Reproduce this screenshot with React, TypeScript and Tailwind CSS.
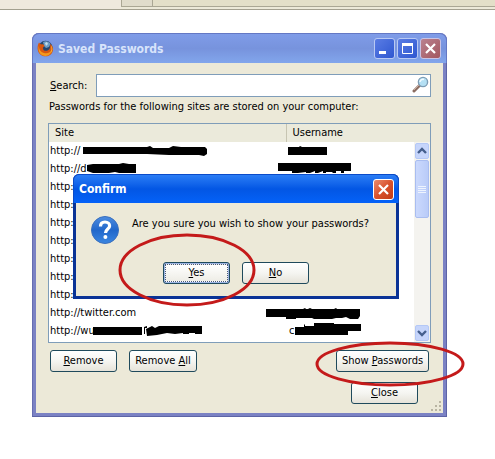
import React from 'react';

type Row = {
  site: string;
  user?: string;
  siteMask?: string;
  userMask?: string;
};

// masks are drawn in the cell's own coordinates
const ROWS: Row[] = [
  {
    site: 'http://',
    siteMask: 'M34 5H98L101 4L104 6H120L124 4L132 5H156L158 7V12L155 14L150 13H120L98 12H34Z',
    userMask: 'M2 5H13L14 4L16 5H41V13H2Z',
  },
  {
    site: 'http://d',
    siteMask: 'M38 5L44 4H70L74 3L80 4H87V13H70L66 12L60 13H44L38 11Z',
    userMask: 'M-8 3H65V11H58V13H55V11H50V13H47L46 12H40V13H37V11L32 13H29V11L24 13H20V12L12 13H6V11H-8Z',
  },
  { site: 'http:' },
  { site: 'http:' },
  { site: 'http:' },
  { site: 'http:' },
  { site: 'http:' },
  { site: 'http:' },
  { site: 'http:' },
  {
    site: 'http://twitter.com',
    userMask: 'M-20 5H17L19 4L20 5H22L24 4L26 5H48L50 4L51 5H74V12L72 15H64L60 13L56 14H50L46 15H28L26 14H10V15H0V13H-20Z',
  },
  {
    site: 'http://wu',
    user: 'c',
    siteMask: 'M44 5H93V13H44ZM95 5L98 4V6H96V12H95ZM97 7L103 4L106 6L110 4H153V12H146V11H140V12H134V11L126 12L118 11L108 13L98 14Z',
    userMask: 'M9 5H18V3L19 2V4H28V1H48V2H75V9H62V13H9Z',
  },
];

const BUTTON =
  'h-[22px] rounded-[3px] border border-[#1f4a5c] bg-gradient-to-b from-white via-[#f5f5f1] to-[#e6e3d9] text-center leading-4 whitespace-nowrap';

function Mask({ d }: { d?: string }) {
  if (!d) return null;
  return (
    <svg className="absolute top-0 left-0 overflow-visible" width="18" height="18" aria-hidden="true">
      <path d={d} fill="#000" />
    </svg>
  );
}

function FirefoxIcon() {
  return (
    <svg width="17" height="17" viewBox="0 0 17 17" aria-hidden="true">
      <circle cx="8.5" cy="8" r="7.2" fill="#27456f" />
      <path d="M6 2C8 .8 12 1 13.500 4L12 7L9 8L7 6Z" fill="#6d9cc4" />
      <path d="M8 3L10 2L11 4L9 6Z" fill="#c3dcea" />
      <path
        d="M2 2.500L4 4.500C5.500 4 7 4.500 7.500 6L6 7.500C5.500 10 8 11.500 10.500 10.500C13 9.500 13.500 7 13 4C16 6 17 9.500 15 13C12.500 17 6 17.500 2.800 14C0 11 0 6 2 2.500Z"
        fill="#d9560f"
      />
      <path d="M2 5C1.500 9 3.500 12 7 13C11 14 13.500 12 14.800 9.500C15 13 12 16 8.500 16C4 16 0 12 2 5Z" fill="#f39a1d" />
      <path d="M14 5C16 8 15.500 11 14 13C14.800 10 14.800 8 14 5Z" fill="#ffd84a" />
    </svg>
  );
}

function SearchIcon() {
  return (
    <svg className="absolute top-[2px] right-[2px]" width="17" height="17" viewBox="0 0 17 17" aria-hidden="true">
      <path d="M2 15L8 9" stroke="#8c6d61" strokeWidth="3" strokeLinecap="round" />
      <path d="M2 14L7 9" stroke="#c9aea3" strokeWidth="1" />
      <circle cx="11" cy="6" r="4.600" fill="#b5e0f4" stroke="#7d9db5" strokeWidth="1.400" />
      <path d="M8 6C8 4 10 3 12 3.500" stroke="#f2fbff" strokeWidth="1.500" fill="none" />
    </svg>
  );
}

function QuestionIcon() {
  return (
    <svg className="shrink-0" width="28" height="28" viewBox="0 0 28 28" aria-hidden="true">
      <defs>
        <linearGradient id="ask" x1="0" y1="0" x2="0" y2="1">
          <stop offset="0" stopColor="#4d8ce0" />
          <stop offset="0.500" stopColor="#2167cb" />
          <stop offset="1" stopColor="#3b86e0" />
        </linearGradient>
      </defs>
      <circle cx="14" cy="14" r="13.500" fill="url(#ask)" stroke="#3a6fbd" />
      <path
        d="M9.500 10.500C9.500 7.500 11.500 6 14 6C16.800 6 18.600 7.700 18.600 10C18.600 13 14.500 13.200 14.500 17"
        fill="none"
        stroke="#fff"
        strokeWidth="3.200"
      />
      <circle cx="14.400" cy="21" r="2" fill="#fff" />
    </svg>
  );
}

function CloseGlyph() {
  return (
    <svg width="19" height="19" viewBox="0 0 19 19" aria-hidden="true">
      <path d="M5 5L14 14M14 5L5 14" stroke="#fff" strokeWidth="2.200" />
    </svg>
  );
}

function ScrollArrow({ d, label }: { d: string; label: string }) {
  return (
    <button
      aria-label={label}
      className="flex h-4 w-full items-center justify-center rounded-[2px] border border-[#b4c8f6] bg-[#c6d5fb]"
    >
      <svg width="10" height="8" viewBox="0 0 10 8" aria-hidden="true">
        <path d={d} fill="none" stroke="#455f8d" strokeWidth="2.400" />
      </svg>
    </button>
  );
}

function ScrollBar() {
  return (
    <div className="absolute top-[18px] right-0 bottom-0 flex w-4 flex-col bg-[#f4f3ef] p-px">
      <ScrollArrow label="Scroll up" d="M1 6L5 2L9 6" />
      <div className="mt-px flex h-[58px] flex-col items-center justify-center gap-px rounded-[2px] border border-[#a9bdf0] bg-gradient-to-r from-[#cbd9fd] to-[#b9cbf8]">
        <span className="h-px w-2 bg-[#eef4fe]" />
        <span className="h-px w-2 bg-[#eef4fe]" />
        <span className="h-px w-2 bg-[#eef4fe]" />
        <span className="h-px w-2 bg-[#eef4fe]" />
      </div>
      <div className="flex-1" />
      <ScrollArrow label="Scroll down" d="M1 2L5 6L9 2" />
    </div>
  );
}

function BrowserStrip() {
  return (
    <div className="flex h-[10px] border-b border-[#a3a08f] bg-[#ece9d8]">
      <div className="w-[121px] bg-[#efe9dd]" />
      <div className="mb-[2px] w-8 border-x border-b border-[#aaa794] bg-[#e0dccb]" />
      <div className="mb-[2px] flex-1 border-b border-[#aaa794] bg-[#e3dfc8]" />
    </div>
  );
}

function ConfirmDialog() {
  return (
    <div
      role="dialog"
      aria-label="Confirm"
      className="absolute top-[141px] right-12 left-[41px] rounded-t-[6px] bg-[#0a3396] px-[3px] pb-[3px]"
    >
      <div className="-mx-[3px] flex h-[29px] items-center justify-between rounded-t-[6px] border border-b-0 border-[#0b4bc9] bg-gradient-to-b from-[#2a7df5] via-[#0356e4] to-[#0462f8] pr-1 pl-[5px]">
        <h2 className="text-[12px] leading-4 font-bold text-white">Confirm</h2>
        <button
          aria-label="Close"
          className="flex size-[21px] items-center justify-center rounded-[3px] border border-white bg-gradient-to-br from-[#e88a6c] via-[#d9512c] to-[#c03c16]"
        >
          <CloseGlyph />
        </button>
      </div>
      <div className="bg-[#ece9d8] px-[15px] pt-[13px] pb-3">
        <div className="flex items-start gap-[13px]">
          <QuestionIcon />
          <p className="leading-4 whitespace-nowrap">Are you sure you wish to show your passwords?</p>
        </div>
        <div className="mt-[18px] flex justify-center gap-3">
          <button className="h-[22px] w-[67px] rounded-[3px] border border-[#1f4a5c] bg-[#9db5e4] p-px leading-4">
            <span className="block h-full border border-dotted border-[#4a5a78] bg-gradient-to-b from-white to-[#eeede6]">
              <u>Y</u>es
            </span>
          </button>
          <button className={`${BUTTON} w-[67px]`}>
            <u>N</u>o
          </button>
        </div>
      </div>
    </div>
  );
}

function PasswordTable() {
  return (
    <div className="relative mt-2 border border-[#7f9db9] bg-white pb-[2px]">
      <table className="w-full table-fixed border-collapse">
        <thead>
          <tr className="h-[18px] bg-[#ebeadb] text-left">
            <th className="w-[237px] border-r border-[#c7c5b2] p-0 pl-[6px] leading-4 font-normal">Site</th>
            <th className="p-0 pl-[6px] leading-4 font-normal">Username</th>
          </tr>
        </thead>
        <tbody>
          {ROWS.map((row, i) => (
            <tr key={i} className="h-[18px]">
              <td className="relative p-0 pl-px leading-4">
                {row.site}
                <Mask d={row.siteMask} />
              </td>
              <td className="relative p-0 pl-[3px] leading-4">
                {row.user}
                <Mask d={row.userMask} />
              </td>
            </tr>
          ))}
        </tbody>
      </table>
      <ScrollBar />
    </div>
  );
}

export default function App() {
  return (
    <div className="min-h-screen bg-white font-['DejaVu_Sans_Condensed','DejaVu_Sans',sans-serif] text-[11px] text-black">
      <BrowserStrip />
      <div className="relative mt-[23px] mr-12 ml-8">
        <div className="rounded-t-[7px] bg-[#7b82c4] px-1 pb-1 shadow-[inset_-1px_-1px_0_#5d64a6,inset_1px_0_0_#666db0]">
          <div className="-mx-1 flex h-[30px] items-center justify-between rounded-t-[7px] border border-b-0 border-[#6478c4] bg-gradient-to-b from-[#7f9ce8] via-[#7793dd] to-[#82a6ec] pr-[5px] pl-1">
            <div className="flex items-center gap-1">
              <FirefoxIcon />
              <h1 className="text-[12px] leading-4 font-bold text-[#d8e4fb]">Saved Passwords</h1>
            </div>
            <div className="flex gap-[2px]">
              <button
                aria-label="Minimize"
                className="flex size-[21px] items-center justify-center rounded-[3px] border border-[#b9c9f3] bg-gradient-to-br from-[#5a7ce4] to-[#2f57d0]"
              >
                <svg width="19" height="19" aria-hidden="true">
                  <rect x="4" y="12" width="7" height="3" fill="#fff" />
                </svg>
              </button>
              <button
                aria-label="Maximize"
                className="flex size-[21px] items-center justify-center rounded-[3px] border border-[#b9c9f3] bg-gradient-to-br from-[#5a7ce4] to-[#2f57d0]"
              >
                <svg width="19" height="19" aria-hidden="true">
                  <path d="M4.500 4V14.500H14.500V4" fill="none" stroke="#fff" />
                  <rect x="4" y="4" width="11" height="3" fill="#fff" />
                </svg>
              </button>
              <button
                aria-label="Close window"
                className="flex size-[21px] items-center justify-center rounded-[3px] border border-[#c9c3e4] bg-gradient-to-br from-[#b98290] to-[#a3575f]"
              >
                <CloseGlyph />
              </button>
            </div>
          </div>

          <div className="relative bg-[#ece9d8] px-3 pt-[11px] pb-[9px]">
            <div className="flex items-center">
              <label htmlFor="search" className="w-12 pl-[2px] leading-4">
                <u>S</u>earch:
              </label>
              <div className="relative flex-1">
                <input id="search" type="text" className="block h-[23px] w-full border border-[#7f9db9] bg-white pr-5 pl-1" />
                <SearchIcon />
              </div>
            </div>
            <p className="mt-[2px] pl-px leading-4 whitespace-nowrap">
              Passwords for the following sites are stored on your computer:
            </p>
            <PasswordTable />
            <div className="mt-[7px] flex justify-between px-[2px]">
              <div className="flex gap-3">
                <button className={`${BUTTON} w-[67px]`}>
                  <u>R</u>emove
                </button>
                <button className={`${BUTTON} w-[68px]`}>
                  Remove <u>A</u>ll
                </button>
              </div>
              <button className={`${BUTTON} w-[93px]`}>
                Show <u>P</u>asswords
              </button>
            </div>
            <div className="mt-[10px] flex justify-end pr-[13px]">
              <button className={`${BUTTON} w-[67px]`}>
                <u>C</u>lose
              </button>
            </div>
            <svg className="absolute right-px bottom-px" width="12" height="12" aria-hidden="true">
              <path d="M9 1h2v2h-2zM5 5h2v2h-2zM9 5h2v2h-2zM1 9h2v2h-2zM5 9h2v2h-2zM9 9h2v2h-2z" fill="#b8b4a2" />
            </svg>
          </div>
        </div>

        <ConfirmDialog />

        {/* hand drawn markers */}
        <svg className="pointer-events-none absolute top-[200px] left-[86px]" width="140" height="76" aria-hidden="true">
          <ellipse cx="69" cy="37" rx="67" ry="35" fill="none" stroke="#c41a1a" strokeWidth="3" />
        </svg>
        <svg className="pointer-events-none absolute top-[306px] -right-[18px]" width="150" height="50" aria-hidden="true">
          <ellipse cx="75" cy="25" rx="73" ry="21" fill="none" stroke="#c41a1a" strokeWidth="3" />
        </svg>
      </div>
    </div>
  );
}
